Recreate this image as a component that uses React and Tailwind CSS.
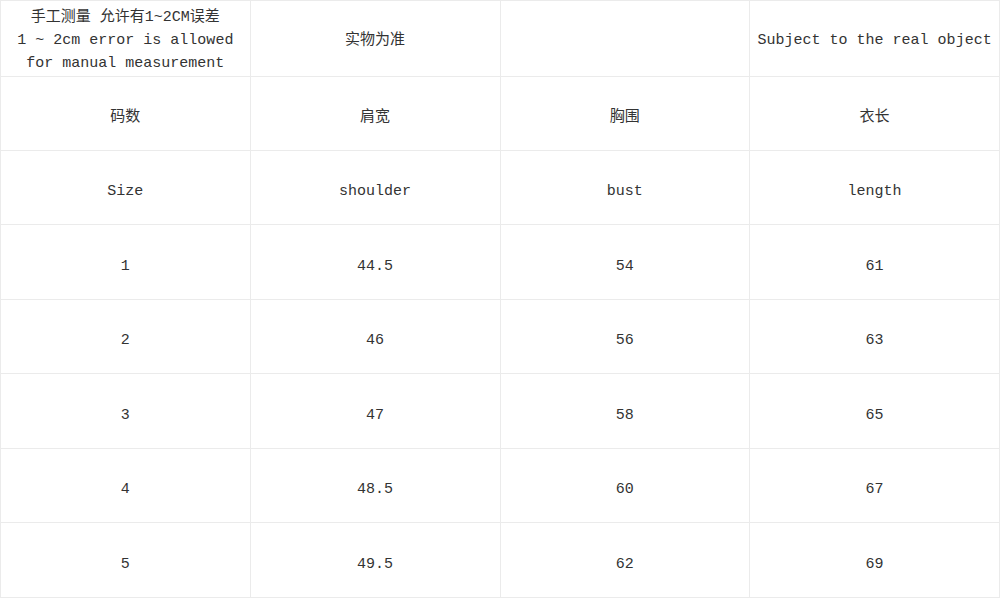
import React from "react";

const rows = [
  ["码数", "肩宽", "胸围", "衣长"],
  ["Size", "shoulder", "bust", "length"],
  ["1", "44.5", "54", "61"],
  ["2", "46", "56", "63"],
  ["3", "47", "58", "65"],
  ["4", "48.5", "60", "67"],
  ["5", "49.5", "62", "69"],
];

const cell =
  "border border-[#ebebeb] text-center align-middle px-0 pb-0 pt-[10px] w-1/4";
const cellTop =
  "border border-[#ebebeb] text-center align-middle px-0 pb-0 pt-[5px] w-1/4";

export default function App() {
  return (
    <div className="bg-white w-[1000px] h-[599px]">
      <table
        className="w-[1000px] h-[598px] border-collapse table-fixed text-[15px] text-[#333]"
        style={{ fontFamily: '"Liberation Mono", "Noto Sans CJK SC", monospace' }}
      >
        <tbody>
          <tr className="h-[74px]">
            <td className={cellTop + " leading-[23px]"}>
              <div>手工测量 允许有1~2CM误差</div>
              <div>1 ~ 2cm error is allowed</div>
              <div>for manual measurement</div>
            </td>
            <td className={cellTop}>实物为准</td>
            <td className={cellTop}></td>
            <td className={cellTop}>Subject to the real object</td>
          </tr>
          {rows.map((r, i) => (
            <tr key={i} className="h-[74px]">
              {r.map((c, j) => (
                <td key={j} className={cell}>
                  {c}
                </td>
              ))}
            </tr>
          ))}
        </tbody>
      </table>
    </div>
  );
}
